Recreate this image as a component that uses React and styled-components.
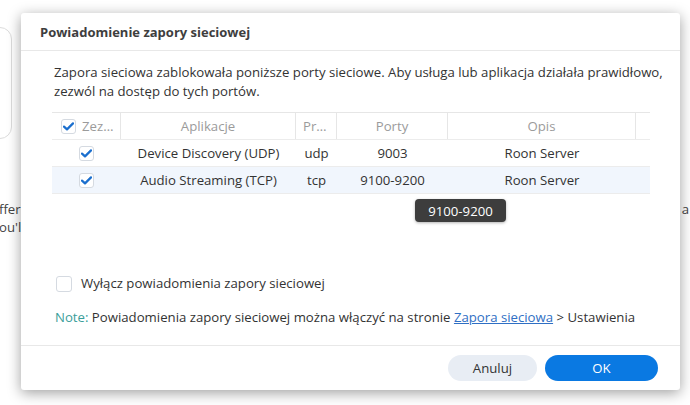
import React from 'react'
import styled, {createGlobalStyle} from 'styled-components'

const GlobalStyle = createGlobalStyle`
    html, body {
        margin: 0;
        padding: 0;
        background: #ffffff;
    }
    body {
        font-family: "Open Sans", "Noto Sans", "DejaVu Sans", sans-serif;
        font-size: 13.2px;
        color: #333333;
    }
`

const Page = styled.div`
    position: relative;
    width: 690px;
    height: 405px;
    overflow: hidden;
    background: #ffffff;
`

const Backdrop = styled.div`
    display: flex;
    flex-direction: column;
    padding-top: 27px;
`

const BackCard = styled.div`
    width: 210px;
    height: 110px;
    margin-left: -200px;
    border: 1px solid #dcdcdc;
    border-radius: 12px;
`

const BackText = styled.div`
    display: flex;
    justify-content: space-between;
    margin-top: 61px;
    line-height: 18px;
    color: #444444;
    .left {
        margin-left: -1px;
    }
    .right {
        margin-right: 1px;
    }
`

const Dialog = styled.div`
    position: absolute;
    left: 21px;
    top: 13px;
    width: 659px;
    height: 377px;
    display: flex;
    flex-direction: column;
    background: #ffffff;
    border-radius: 3px;
    box-shadow: 0 3px 14px rgba(0, 0, 0, 0.38);
`

const Header = styled.div`
    height: 37px;
    display: flex;
    align-items: center;
    padding-left: 19px;
    border-bottom: 1px solid #e8e8e8;
    h2 {
        margin: 0;
        font-size: 13px;
        font-weight: 700;
        color: #3e3e3e;
    }
`

const Body = styled.div`
    flex: 1;
    display: flex;
    flex-direction: column;
    padding: 12px 30px 18px 31px;
`

const Intro = styled.p`
    margin: 0 -26px 11px 2px;
    line-height: 19px;
`

const Table = styled.div`
    display: flex;
    flex-direction: column;
    width: 598px;
`

const Row = styled.div`
    display: grid;
    grid-template-columns: 69px 175px 41px 111px 188px 14px;
    box-sizing: border-box;
    height: ${p => (p.$head ? 28 : 27)}px;
    background: ${p => (p.$selected ? '#f1f6fd' : '#ffffff')};
    border-top: ${p => (p.$head ? '1px solid #e6e6e6' : 'none')};
    border-bottom: 1px solid #ececec;
`

const Cell = styled.div`
    display: flex;
    align-items: center;
    justify-content: ${p => (p.$left ? 'flex-start' : 'center')};
    padding: ${p => (p.$left ? '0 0 0 9px' : p.$head ? '0 7px' : '0 4px')};
    gap: 6px;
    overflow: hidden;
    white-space: nowrap;
    color: ${p => (p.$head ? '#9b9b9b' : '#333333')};
    border-right: ${p => (p.$divider ? '1px solid #e6e6e6' : 'none')};
    span {
        overflow: hidden;
        text-overflow: ellipsis;
    }
`

const Box = styled.span`
    flex: none;
    width: ${p => p.$size}px;
    height: ${p => p.$size}px;
    box-sizing: border-box;
    display: flex;
    align-items: center;
    justify-content: center;
    border: 1px solid #d5dae1;
    border-radius: 3px;
    background: #ffffff;
`

const Tooltip = styled.div`
    position: absolute;
    left: 394px;
    top: 186px;
    width: 91px;
    height: 23px;
    display: flex;
    align-items: center;
    justify-content: center;
    background: #3d3d3d;
    color: #ffffff;
    border-radius: 4px;
    box-shadow: 0 1px 3px rgba(0, 0, 0, 0.3);
`

const Bottom = styled.div`
    margin-top: auto;
    display: flex;
    flex-direction: column;
    gap: 15px;
`

const OptionRow = styled.label`
    display: flex;
    align-items: center;
    gap: 9px;
    margin-left: 4px;
    line-height: 19px;
`

const Note = styled.div`
    margin-left: 3px;
    line-height: 19px;
    b {
        font-weight: 400;
        color: #3a9e9a;
    }
    a {
        color: #2f6fc4;
        text-decoration: underline;
    }
`

const Footer = styled.div`
    height: 44px;
    display: flex;
    align-items: center;
    justify-content: flex-end;
    gap: 8px;
    padding-right: 22px;
    border-top: 1px solid #e8e8e8;
`

const Button = styled.button`
    width: ${p => (p.$primary ? 113 : 89)}px;
    height: 26px;
    border: none;
    border-radius: 13px;
    font-family: inherit;
    font-size: 13.2px;
    background: ${p => (p.$primary ? '#0a79e2' : '#e8edf4')};
    color: ${p => (p.$primary ? '#ffffff' : '#333333')};
`

function Check({size = 15, checked}) {
    return (
        <Box $size={size}>
            {checked && (
                <svg width="11" height="9" viewBox="0 0 11 9">
                    <polyline points="1,4.6 4,7.4 10,1.4" fill="none" stroke="#1b6fce" strokeWidth="2.2" strokeLinecap="round" strokeLinejoin="round" />
                </svg>
            )}
        </Box>
    )
}

const rows = [
    {app: 'Device Discovery (UDP)', proto: 'udp', ports: '9003', desc: 'Roon Server'},
    {app: 'Audio Streaming (TCP)', proto: 'tcp', ports: '9100-9200', desc: 'Roon Server'},
]

export default function App() {
    return (
        <Page>
            <GlobalStyle />
            <Backdrop>
                <BackCard />
                <BackText>
                    <div className="left">ffer<br />ou'l</div>
                    <div className="right">a</div>
                </BackText>
            </Backdrop>
            <Dialog>
                <Header>
                    <h2>Powiadomienie zapory sieciowej</h2>
                </Header>
                <Body>
                    <Intro>
                        Zapora sieciowa zablokowała poniższe porty sieciowe. Aby usługa lub aplikacja działała prawidłowo, zezwól na dostęp do tych portów.
                    </Intro>
                    <Table>
                        <Row $head>
                            <Cell $head $left $divider><Check checked /><span>Zezwól</span></Cell>
                            <Cell $head $divider>Aplikacje</Cell>
                            <Cell $head $divider><span>Protokół</span></Cell>
                            <Cell $head $divider>Porty</Cell>
                            <Cell $head $divider>Opis</Cell>
                            <Cell $head />
                        </Row>
                        {rows.map((r, i) => (
                            <Row key={i} $selected={i === 1}>
                                <Cell><Check checked /></Cell>
                                <Cell>{r.app}</Cell>
                                <Cell>{r.proto}</Cell>
                                <Cell>{r.ports}</Cell>
                                <Cell>{r.desc}</Cell>
                                <Cell />
                            </Row>
                        ))}
                    </Table>
                    <Bottom>
                        <OptionRow>
                            <Check size={16} />
                            Wyłącz powiadomienia zapory sieciowej
                        </OptionRow>
                        <Note>
                            <b>Note:</b> Powiadomienia zapory sieciowej można włączyć na stronie <a>Zapora sieciowa</a> &gt; Ustawienia
                        </Note>
                    </Bottom>
                </Body>
                <Footer>
                    <Button>Anuluj</Button>
                    <Button $primary>OK</Button>
                </Footer>
                <Tooltip>9100-9200</Tooltip>
            </Dialog>
        </Page>
    )
}
